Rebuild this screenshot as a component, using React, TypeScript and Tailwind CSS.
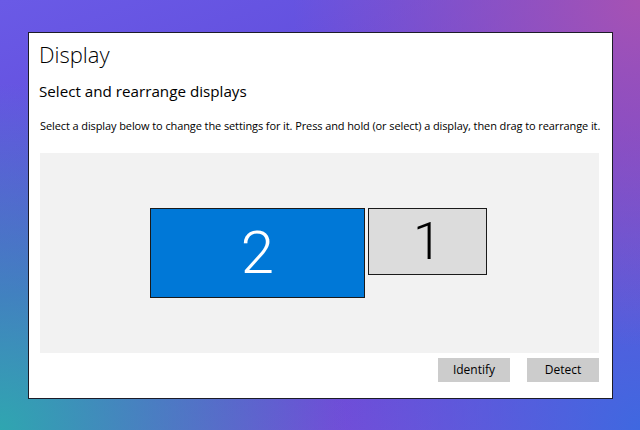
export default function App() {
  return (
    <div className="w-[640px] h-[430px] overflow-hidden pl-[28px] pt-[32px] bg-[radial-gradient(circle_at_0%_100%,#2fa6b0_0%,rgba(47,166,176,0)_45%),radial-gradient(circle_at_100%_0%,#a652b4_0%,rgba(166,82,180,0)_45%),radial-gradient(circle_at_100%_100%,#3f68e0_0%,rgba(63,104,224,0)_40%),linear-gradient(160deg,#6a5ae6_0%,#5e48d8_45%,#7b4fd8_100%)]">
      <div className="w-[585px] h-[367px] bg-white border border-[#1c1c28] flex flex-col px-[11px] font-['Segoe_UI','Open_Sans','Noto_Sans',sans-serif] text-black">
        {/* Header */}
        <h1 className="mt-[6px] -ml-[1px] text-[22px] leading-[30px] font-light">Display</h1>
        <h2 className="mt-[11px] -ml-[1px] text-[15.2px] leading-[22px]">Select and rearrange displays</h2>
        <p className="mt-[16px] text-[11px] tracking-[-0.1px] leading-[16px] whitespace-nowrap">
          Select a display below to change the settings for it. Press and hold (or select) a display, then drag to rearrange it.
        </p>

        {/* Arrangement area */}
        <div className="mt-[19px] w-[559px] h-[200px] bg-[#f2f2f2] flex items-center justify-center">
          <div className="flex items-start gap-[3px] ml-[-2px]">
            <div className="w-[215px] h-[90px] bg-[#0078d7] border border-[#1a1a1a] flex items-center justify-center">
              <span className="text-white text-[60px] leading-none font-['Segoe_UI','Roboto',sans-serif] font-light">2</span>
            </div>
            <div className="w-[119px] h-[67px] bg-[#dcdcdc] border border-[#1a1a1a] flex items-center justify-center">
              <span className="text-black text-[52px] leading-none font-['Segoe_UI','Roboto',sans-serif] font-light">1</span>
            </div>
          </div>
        </div>

        {/* Actions */}
        <div className="mt-[5px] w-[559px] flex justify-end gap-[17px]">
          <button className="w-[72px] h-[24px] bg-[#cccccc] text-[12px] text-black">Identify</button>
          <button className="w-[72px] h-[24px] bg-[#cccccc] text-[12px] text-black">Detect</button>
        </div>
      </div>
    </div>
  )
}
